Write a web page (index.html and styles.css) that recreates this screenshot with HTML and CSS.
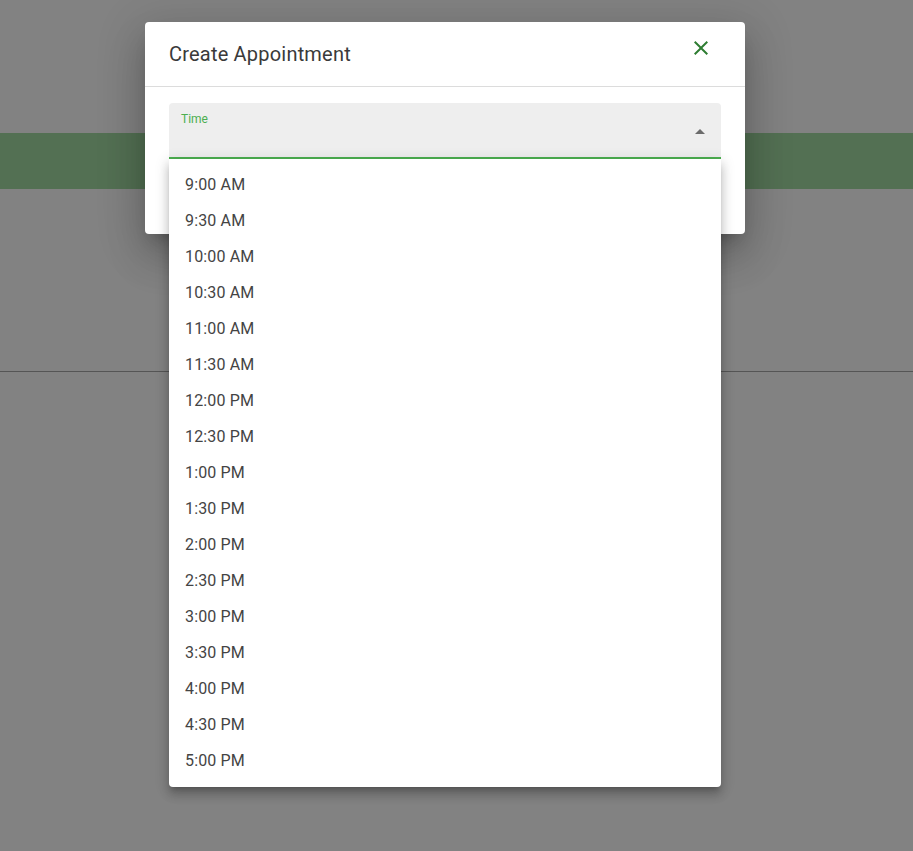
FILE: index.html
```html
<!DOCTYPE html>
<html>
<head>
<meta charset="utf-8">
<link rel="stylesheet" href="styles.css">
</head>
<body>
<div class="page">
  <div class="top-space"></div>
  <div class="band"></div>
  <div class="content"></div>
</div>

<div class="dialog">
  <div class="dialog-header">
    <div class="dialog-title">Create Appointment</div>
    <button class="close-btn" aria-label="close">
      <svg width="24" height="24" viewBox="0 0 24 24"><path fill="#2e7d32" d="M19 6.41L17.59 5 12 10.59 6.41 5 5 6.41 10.59 12 5 17.59 6.41 19 12 13.41 17.59 19 19 17.59 13.41 12z"/></svg>
    </button>
  </div>
  <div class="dialog-body">
    <div class="select-field">
      <div class="select-label">Time</div>
      <div class="select-arrow"></div>
    </div>
  </div>
</div>

<ul class="menu">
  <li>9:00 AM</li>
  <li>9:30 AM</li>
  <li>10:00 AM</li>
  <li>10:30 AM</li>
  <li>11:00 AM</li>
  <li>11:30 AM</li>
  <li>12:00 PM</li>
  <li>12:30 PM</li>
  <li>1:00 PM</li>
  <li>1:30 PM</li>
  <li>2:00 PM</li>
  <li>2:30 PM</li>
  <li>3:00 PM</li>
  <li>3:30 PM</li>
  <li>4:00 PM</li>
  <li>4:30 PM</li>
  <li>5:00 PM</li>
</ul>
</body>
</html>
```

FILE: styles.css
```css
html, body {
  margin: 0;
  padding: 0;
}
body {
  background: #828282;
  font-family: Roboto, "Liberation Sans", sans-serif;
  width: 913px;
  height: 851px;
  overflow: hidden;
  position: relative;
}
.page {
  display: flex;
  flex-direction: column;
}
.top-space {
  height: 133px;
}
.band {
  height: 56px;
  background: #537053;
}
.content {
  height: 182px;
  border-bottom: 1px solid #555;
}
.dialog {
  position: absolute;
  left: 145px;
  top: 22px;
  width: 600px;
  height: 212px;
  background: #fff;
  border-radius: 4px;
  box-shadow: 0 11px 15px -7px rgba(0,0,0,.2), 0 24px 38px 3px rgba(0,0,0,.14), 0 9px 46px 8px rgba(0,0,0,.12);
  display: flex;
  flex-direction: column;
}
.dialog-header {
  height: 64px;
  border-bottom: 1px solid #dcdcdc;
  display: flex;
  align-items: center;
  justify-content: space-between;
  padding: 0 20px 0 24px;
}
.dialog-title {
  font-size: 20px;
  letter-spacing: 0.2px;
  color: #3a3a3a;
}
.close-btn {
  width: 48px;
  height: 48px;
  border: none;
  background: transparent;
  padding: 12px;
  margin-top: -12px;
  display: flex;
  align-items: center;
  justify-content: center;
}
.dialog-body {
  padding: 16px 24px;
}
.select-field {
  height: 54px;
  background: #eeeeee;
  border-radius: 4px 4px 0 0;
  border-bottom: 2px solid #4caf50;
  position: relative;
}
.select-label {
  position: absolute;
  left: 12px;
  top: 9px;
  font-size: 12px;
  color: #4caf50;
}
.select-arrow {
  position: absolute;
  right: 16px;
  top: 26px;
  width: 0;
  height: 0;
  border-left: 5px solid transparent;
  border-right: 5px solid transparent;
  border-bottom: 5px solid #6b6b6b;
}
.menu {
  position: absolute;
  left: 169px;
  top: 159px;
  width: 552px;
  margin: 0;
  padding: 8px 0;
  list-style: none;
  background: #fff;
  border-radius: 0 0 4px 4px;
  box-shadow: 0 5px 5px -3px rgba(0,0,0,.2), 0 8px 10px 1px rgba(0,0,0,.14), 0 3px 14px 2px rgba(0,0,0,.12);
}
.menu li {
  height: 36px;
  line-height: 36px;
  padding: 0 16px;
  font-size: 16px;
  letter-spacing: 0.15px;
  color: #444;
}
```
